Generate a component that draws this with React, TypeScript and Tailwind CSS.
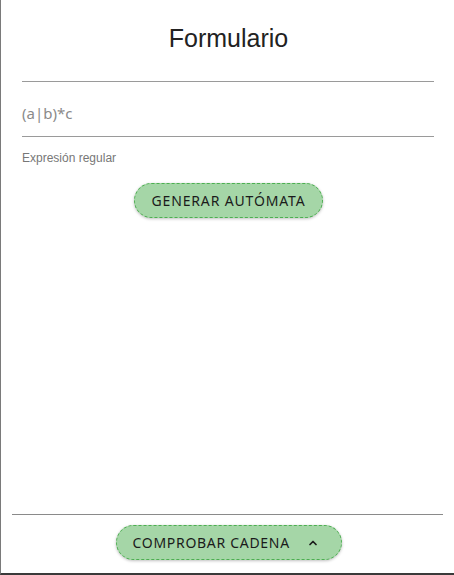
import React from "react";

export default function App() {
  return (
    <div className="w-[454px] h-[575px] flex flex-col bg-white border-l border-l-[#7a7a7a] border-b-2 border-b-[#3a3a3a] overflow-hidden">
      <div className="flex-1 flex flex-col pl-[21px] pr-[20px]">
        <h1 className="text-center text-[25px] leading-none mt-[26px] pl-[1px] text-[#222] [font-family:'Liberation_Sans',Arial,sans-serif]">
          Formulario
        </h1>
        <div className="mt-[30px] h-px bg-[#9a9a9a]" />
        <div className="mt-[21px] h-[20px] flex items-center text-[15px] text-[#8a8a8a] [font-family:'Noto_Sans',sans-serif]">
          (a|b)*c
        </div>
        <div className="mt-[13px] h-px bg-[#9a9a9a]" />
        <div className="mt-[14px] text-[12px] leading-[14px] text-[#777] [font-family:'Liberation_Sans',Arial,sans-serif]">
          Expresión regular
        </div>
        <div className="flex justify-center mt-[18px] pl-[1px]">
          <button className="h-[35px] w-[189px] rounded-full bg-[#a5d6a7] border border-dashed border-[#4caf50] shadow-[0_1px_3px_rgba(0,0,0,0.25)] text-[14px] tracking-[0.06em] text-[#1b1b1b] [font-family:'Noto_Sans',sans-serif]">
            GENERAR AUTÓMATA
          </button>
        </div>
      </div>
      <div className="mx-[11px] h-px bg-[#8a8a8a]" />
      <div className="flex justify-center pt-[10px] pb-[13px] pl-[2px]">
        <button className="h-[35px] w-[226px] rounded-full bg-[#a5d6a7] border border-dashed border-[#4caf50] shadow-[0_1px_3px_rgba(0,0,0,0.25)] flex items-center pl-[16px] text-[14px] tracking-[0.05em] text-[#1b1b1b] [font-family:'Noto_Sans',sans-serif]">
          <span>COMPROBAR CADENA</span>
          <svg className="ml-[17px]" width="12" height="12" viewBox="0 0 24 24" fill="none" stroke="#1b1b1b" strokeWidth="3.5" strokeLinecap="round" strokeLinejoin="round">
            <path d="M6 15l6-6 6 6" />
          </svg>
        </button>
      </div>
    </div>
  );
}
